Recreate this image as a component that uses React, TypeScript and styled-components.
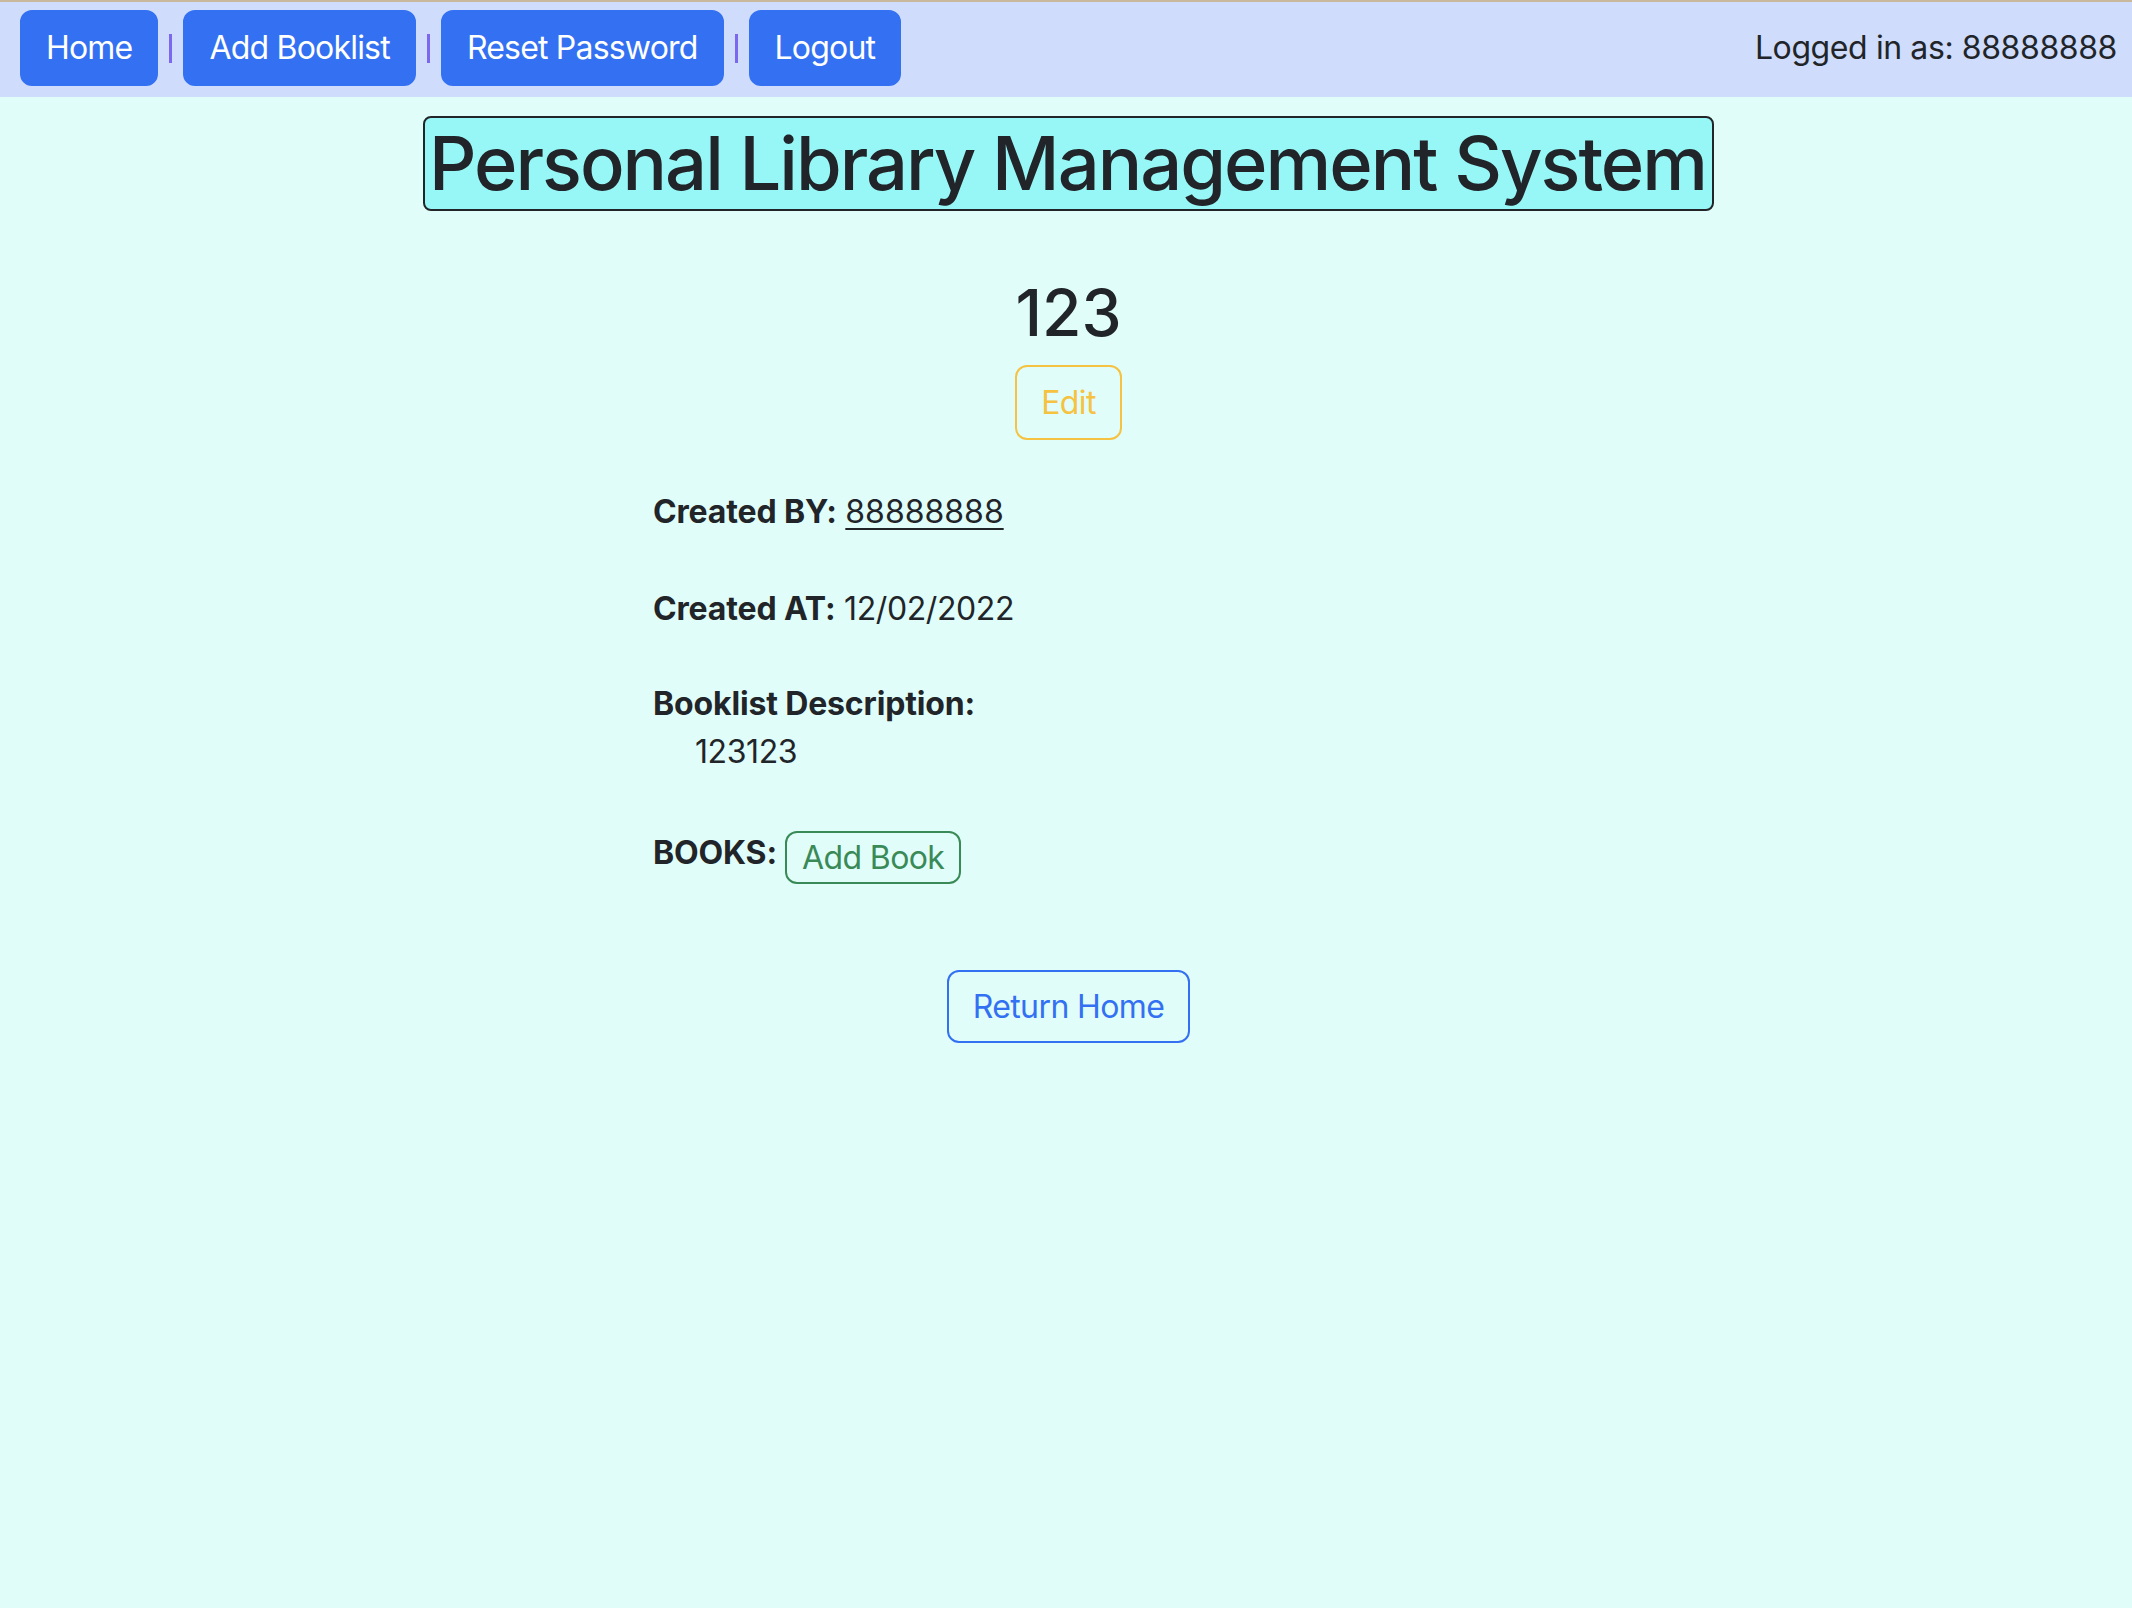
import React from "react";
import styled, { createGlobalStyle } from "styled-components";

const GlobalStyle = createGlobalStyle`
  html, body {
    margin: 0;
    padding: 0;
    background: #e1fdfa;
    font-family: Inter, "Liberation Sans", "DejaVu Sans", sans-serif;
    color: #212529;
  }
  * { box-sizing: border-box; }
`;

const Page = styled.div`
  min-height: 100vh;
  background: #e1fdfa;
`;

const NavBar = styled.nav`
  display: flex;
  justify-content: space-between;
  align-items: center;
  background: #cfdcfb;
  border-top: 2px solid #c9b89c;
  padding: 8px 15px 11px 20px;
`;

const NavGroup = styled.div`
  display: flex;
  align-items: center;
`;

const NavButton = styled.button`
  background: #3371f2;
  color: #ffffff;
  border: 2px solid #3371f2;
  border-radius: 12px;
  padding: 12px 24px;
  font-family: inherit;
  font-size: 32px;
  line-height: 48px;
  letter-spacing: -0.8px;
  font-weight: 400;
  cursor: pointer;
`;

const Separator = styled.span`
  display: block;
  width: 3px;
  height: 29px;
  background: #7b68ee;
  margin: 0 11px;
`;

const UserInfo = styled.div`
  font-size: 32px;
  line-height: 48px;
  letter-spacing: -0.4px;
  color: #212529;
`;

const Main = styled.main`
  display: flex;
  flex-direction: column;
  align-items: center;
  padding-left: 5px;
`;

const TitleBox = styled.h1`
  margin: 19px 0 0;
  display: inline-block;
  font-size: 74px;
  font-weight: 500;
  line-height: 91px;
  letter-spacing: -2px;
  padding: 0 6px 0 4px;
  border: 2px solid #212529;
  border-radius: 8px;
  background: #97f6f6;
  color: #212529;
`;

const ListName = styled.h2`
  margin: 63px 0 14px;
  font-size: 64px;
  font-weight: 500;
  line-height: 77px;
  color: #212529;
`;

const OutlineButton = styled.button<{ $color: string; $small?: boolean }>`
  background: transparent;
  color: ${(p) => p.$color};
  border: 2px solid ${(p) => p.$color};
  border-radius: 12px;
  padding: ${(p) => (p.$small ? "0 15px" : "12px 24px")};
  font-family: inherit;
  font-size: 32px;
  line-height: ${(p) => (p.$small ? "49px" : "47px")};
  letter-spacing: -0.6px;
  font-weight: 400;
  cursor: pointer;
`;

const Details = styled.section`
  width: 831px;
  margin-top: 48px;
  font-size: 32px;
  line-height: 48px;
  letter-spacing: -0.4px;
`;

const Field = styled.div<{ $gap: number }>`
  margin-bottom: ${(p) => p.$gap}px;
`;

const Label = styled.strong`
  font-weight: 700;
  letter-spacing: -0.15px;
`;

const UserLink = styled.a`
  color: #212529;
  text-decoration: underline;
  text-underline-offset: 5px;
  text-decoration-thickness: 2px;
  letter-spacing: 0;
`;

const Indented = styled.div`
  padding-left: 42px;
`;

const BooksRow = styled.div`
  display: flex;
  align-items: flex-start;
  gap: 8px;
  margin-top: 53px;
`;

const AddBookButton = styled(OutlineButton)`
  margin-top: 2px;
`;

const ReturnButton = styled(OutlineButton)`
  margin-top: 86px;
  padding-top: 11px;
  padding-bottom: 11px;
`;

export default function App() {
  return (
    <Page>
      <GlobalStyle />
      <NavBar>
        <NavGroup>
          <NavButton>Home</NavButton>
          <Separator />
          <NavButton>Add Booklist</NavButton>
          <Separator />
          <NavButton>Reset Password</NavButton>
          <Separator />
          <NavButton>Logout</NavButton>
        </NavGroup>
        <UserInfo>Logged in as: 88888888</UserInfo>
      </NavBar>
      <Main>
        <TitleBox>Personal Library Management System</TitleBox>
        <ListName>123</ListName>
        <OutlineButton $color="#f5c242">Edit</OutlineButton>
        <Details>
          <Field $gap={49}>
            <Label>Created BY:</Label> <UserLink href="#">88888888</UserLink>
          </Field>
          <Field $gap={47}>
            <Label>Created AT:</Label> 12/02/2022
          </Field>
          <Field $gap={0}>
            <Label>Booklist Description:</Label>
            <Indented>123123</Indented>
          </Field>
          <BooksRow>
            <Label>BOOKS:</Label>
            <AddBookButton $color="#3a8a57" $small>
              Add Book
            </AddBookButton>
          </BooksRow>
        </Details>
        <ReturnButton $color="#3371f2">Return Home</ReturnButton>
      </Main>
    </Page>
  );
}
